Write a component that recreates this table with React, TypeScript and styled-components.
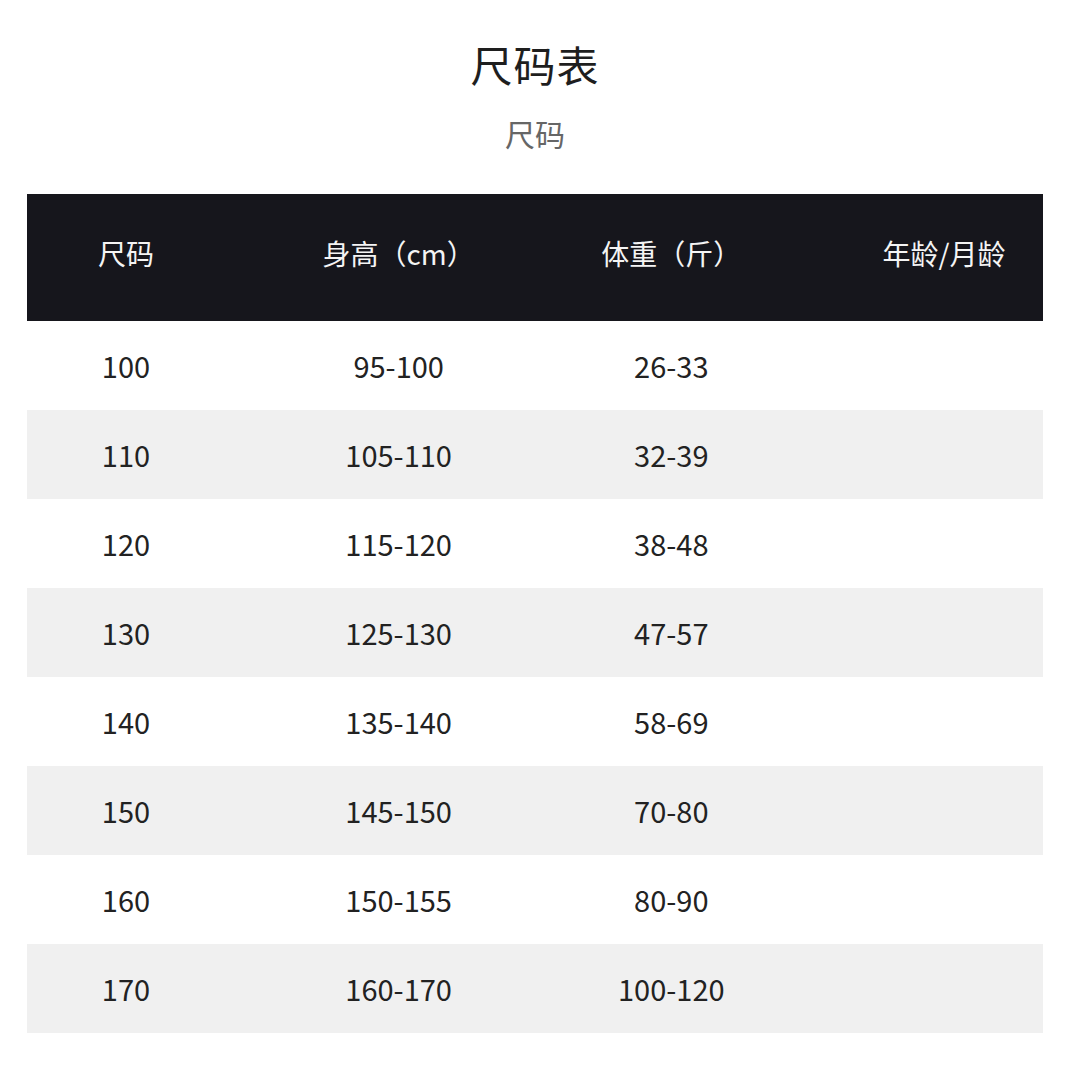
import React from "react";
import styled, { createGlobalStyle } from "styled-components";

const Global = createGlobalStyle`
  html, body { margin: 0; padding: 0; background: #ffffff; }
  body { font-family: "Noto Sans CJK SC", "Noto Sans", sans-serif; color: #222; }
`;

const Page = styled.div`
  width: 1068px;
  height: 1068px;
  box-sizing: border-box;
  padding: 39px 25px 0 27px;
  display: flex;
  flex-direction: column;
  align-items: center;
`;

const Title = styled.h1`
  margin: 0;
  font-size: 42px;
  line-height: 50px;
  font-weight: 400;
  color: #1e1e1e;
  letter-spacing: 1px;
`;

const Subtitle = styled.h2`
  margin: 24px 0 0;
  font-size: 30px;
  line-height: 40px;
  font-weight: 400;
  color: #666;
`;

const Table = styled.div`
  margin-top: 41px;
  width: 1016px;
  display: flex;
  flex-direction: column;
`;

const Row = styled.div<{ $variant: "head" | "white" | "gray" }>`
  display: grid;
  grid-template-columns: repeat(4, 198px);
  column-gap: 74.67px;
  align-items: center;
  box-sizing: border-box;
  height: ${(p) => (p.$variant === "head" ? "127px" : "89px")};
  padding-bottom: ${(p) => (p.$variant === "head" ? "9px" : "0")};
  background: ${(p) =>
    p.$variant === "head" ? "#16161c" : p.$variant === "gray" ? "#f0f0f0" : "#ffffff"};
  color: ${(p) => (p.$variant === "head" ? "#f4f4f4" : "#222")};
`;

const Cell = styled.div<{ $head?: boolean }>`
  text-align: center;
  white-space: nowrap;
  font-size: ${(p) => (p.$head ? "28px" : "29px")};
  font-weight: 400;
  line-height: 1;
`;

const headers = ["尺码", "身高（cm）", "体重（斤）", "年龄/月龄"];

const rows: [string, string, string, string][] = [
  ["100", "95-100", "26-33", ""],
  ["110", "105-110", "32-39", ""],
  ["120", "115-120", "38-48", ""],
  ["130", "125-130", "47-57", ""],
  ["140", "135-140", "58-69", ""],
  ["150", "145-150", "70-80", ""],
  ["160", "150-155", "80-90", ""],
  ["170", "160-170", "100-120", ""],
];

export default function App() {
  return (
    <>
      <Global />
      <Page>
        <Title>尺码表</Title>
        <Subtitle>尺码</Subtitle>
        <Table>
          <Row $variant="head">
            {headers.map((h) => (
              <Cell $head key={h}>
                {h}
              </Cell>
            ))}
          </Row>
          {rows.map((r, i) => (
            <Row key={r[0]} $variant={i % 2 === 1 ? "gray" : "white"}>
              {r.map((c, j) => (
                <Cell key={j}>{c}</Cell>
              ))}
            </Row>
          ))}
        </Table>
      </Page>
    </>
  );
}
